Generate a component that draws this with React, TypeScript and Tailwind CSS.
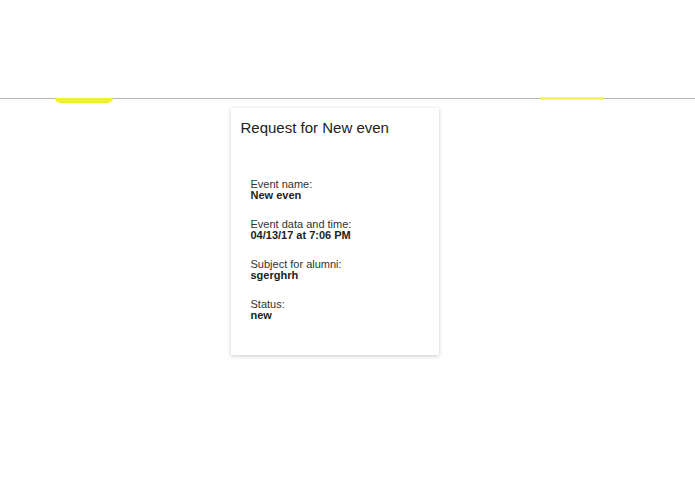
export default function App() {
  const rows = [
    { label: "Event name:", value: "New even" },
    { label: "Event data and time:", value: "04/13/17 at 7:06 PM" },
    { label: "Subject for alumni:", value: "sgerghrh" },
    { label: "Status:", value: "new" },
  ];

  return (
    <div className="min-h-[494px] bg-white text-[#222]" style={{ fontFamily: '"Liberation Sans", Arial, sans-serif' }}>
      <header className="relative h-[99px] border-b border-[#b5b5b5]">
        <span className="absolute left-[55px] top-[98px] h-[5px] w-[58px] rounded-b-[6px] bg-[#f0f038]" />
        <span className="absolute left-[540px] top-[97px] h-[3px] w-[64px] bg-[#f5f56a]" />
      </header>
      <main className="flex justify-center pt-[9px]">
        <div className="ml-[-26px] h-[247px] w-[208px] bg-white px-[10px] pt-[10px] shadow-[0_1px_4px_rgba(0,0,0,0.22)]">
          <h1 className="text-[15px] font-light leading-[20px] text-[#222]">Request for New even</h1>
          <div className="mt-[41px] flex flex-col gap-[18px] pl-[10px]">
            {rows.map((r) => (
              <div key={r.label} className="text-[11px] leading-[11px]">
                <div className="text-[#333]">{r.label}</div>
                <div className="font-bold text-[#222]">{r.value}</div>
              </div>
            ))}
          </div>
        </div>
      </main>
    </div>
  );
}
